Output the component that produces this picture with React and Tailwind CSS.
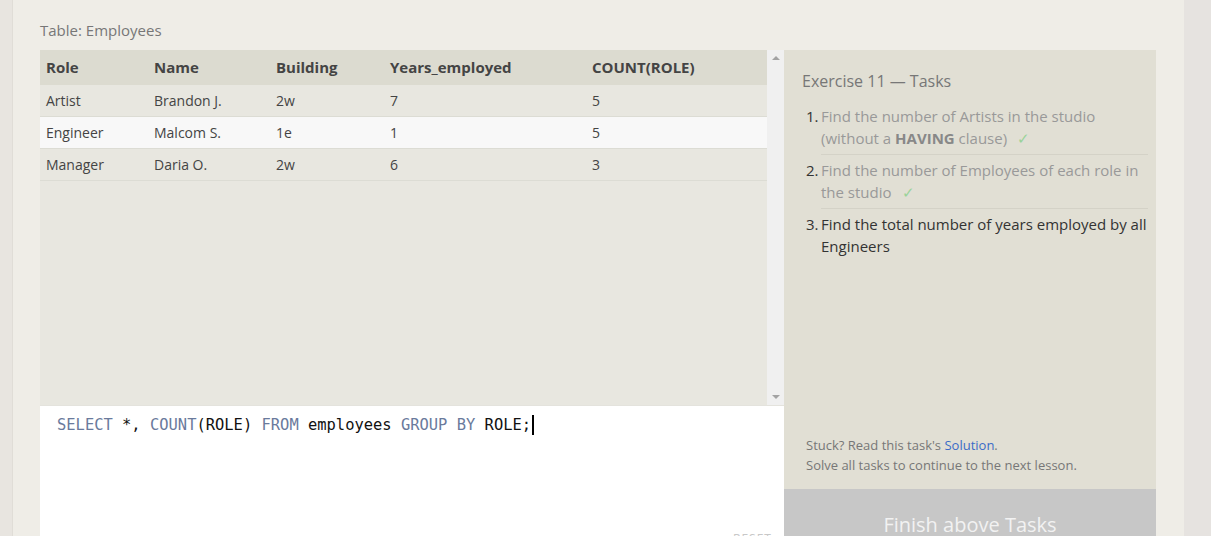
const rows = [
  { role: "Artist", name: "Brandon J.", building: "2w", years: "7", count: "5" },
  { role: "Engineer", name: "Malcom S.", building: "1e", years: "1", count: "5" },
  { role: "Manager", name: "Daria O.", building: "2w", years: "6", count: "3" },
];

const cols = [
  { key: "role", label: "Role", w: "w-[108px]" },
  { key: "name", label: "Name", w: "w-[122px]" },
  { key: "building", label: "Building", w: "w-[114px]" },
  { key: "years", label: "Years_employed", w: "w-[202px]" },
  { key: "count", label: "COUNT(ROLE)", w: "w-[181px]" },
];

const Check = () => <span className="ml-[10px] font-light text-[#9ad39a]">✓</span>;

const App = () => {
  return (
    <div className="flex h-[536px] overflow-hidden bg-[#e8e5e0] font-['Open_Sans',sans-serif]">
      <div className="w-[13px] shrink-0 border-r border-[#e0ddd7] bg-[#e8e5e0]" />
      <div className="w-[1171px] shrink-0 bg-[#efede7] pl-[27px] pr-[27px]">
        <div className="pt-[19px] text-[15px] leading-[22px] text-[#777]">
          Table: Employees
        </div>

        <div className="mt-[9px] flex">
          <div className="w-[744px] shrink-0">
            <div className="flex h-[355px] bg-[#e8e7e0]">
              <div className="flex-1">
                <div className="flex h-[35px] items-center bg-[#dcdbd0] text-[15px] font-bold text-[#444]">
                  {cols.map((c) => (
                    <div key={c.key} className={`${c.w} pl-[6px]`}>
                      {c.label}
                    </div>
                  ))}
                </div>
                {rows.map((r, i) => (
                  <div
                    key={r.role}
                    className={`flex h-[32px] items-center border-b border-[#dcdcd4] text-[14px] text-[#444] ${
                      i === 1 ? "bg-[#f8f8f8]" : ""
                    }`}
                  >
                    {cols.map((c) => (
                      <div key={c.key} className={`${c.w} pl-[6px]`}>
                        {r[c.key]}
                      </div>
                    ))}
                  </div>
                ))}
              </div>
              <div className="flex w-[17px] shrink-0 flex-col items-center justify-between bg-[#f0f0f0] py-[6px]">
                <div className="h-0 w-0 border-x-[4px] border-b-[4px] border-x-transparent border-b-[#a3a3a3]" />
                <div className="h-0 w-0 border-x-[4px] border-t-[4px] border-x-transparent border-t-[#a3a3a3]" />
              </div>
            </div>

            <div className="relative h-[160px] border-t border-[#e4e3dd] bg-white pl-[17px] pt-[8px]">
              <div className="flex items-center font-['DejaVu_Sans_Mono',monospace] text-[15.45px] leading-[22px] text-[#111]">
                <span>
                  <span className="text-[#6a7a9c]">SELECT</span> *,{" "}
                  <span className="text-[#6a7a9c]">COUNT</span>(ROLE){" "}
                  <span className="text-[#6a7a9c]">FROM</span> employees{" "}
                  <span className="text-[#6a7a9c]">GROUP</span>{" "}
                  <span className="text-[#6a7a9c]">BY</span> ROLE;
                </span>
                <span className="ml-[1px] inline-block h-[20px] w-[2px] bg-black" />
              </div>
              <div className="absolute left-[693px] top-[124px] text-[12px] tracking-[1px] text-[#c8c8c8]">
                RESET
              </div>
            </div>
          </div>

          <div className="w-[372px] shrink-0">
            <div className="flex h-[439px] flex-col bg-[#e1dfd4] pl-[18px] pr-[8px]">
              <div className="pt-[20px] text-[16px] leading-[22px] text-[#777]">
                Exercise 11 — Tasks
              </div>
              <ol className="mt-[13px] text-[15px] leading-[22px]">
                <li className="flex">
                  <span className="w-[19px] shrink-0 pl-[4px] text-[#333]">1.</span>
                  <div className="flex-1 border-b border-[#d4d2c7] pb-[5px] text-[#999]">
                    Find the number of Artists in the studio (without a{" "}
                    <b className="text-[#888]">HAVING</b> clause)
                    <Check />
                  </div>
                </li>
                <li className="flex">
                  <span className="w-[19px] shrink-0 pl-[4px] pt-[4px] text-[#333]">2.</span>
                  <div className="flex-1 border-b border-[#d4d2c7] pb-[5px] pt-[4px] text-[#999]">
                    Find the number of Employees of each role in the studio
                    <Check />
                  </div>
                </li>
                <li className="flex">
                  <span className="w-[19px] shrink-0 pl-[4px] pt-[4px] text-[#333]">3.</span>
                  <div className="flex-1 pb-[5px] pt-[4px] text-[#333]">
                    Find the total number of years employed by all Engineers
                  </div>
                </li>
              </ol>
              <div className="mt-auto pb-[14px] pl-[4px] text-[13px] leading-[20px] text-[#777]">
                <div>
                  Stuck? Read this task's{" "}
                  <span className="text-[#3b6cc7]">Solution</span>.
                </div>
                <div>Solve all tasks to continue to the next lesson.</div>
              </div>
            </div>
            <div className="flex h-[70px] justify-center bg-[#c7c7c7] pt-[22px] text-[20px] leading-[28px] text-[#f2f2f2]">
              Finish above Tasks
            </div>
          </div>
        </div>
      </div>
      <div className="flex-1 bg-[#e6e3e0]" />
    </div>
  );
};

export default App;
